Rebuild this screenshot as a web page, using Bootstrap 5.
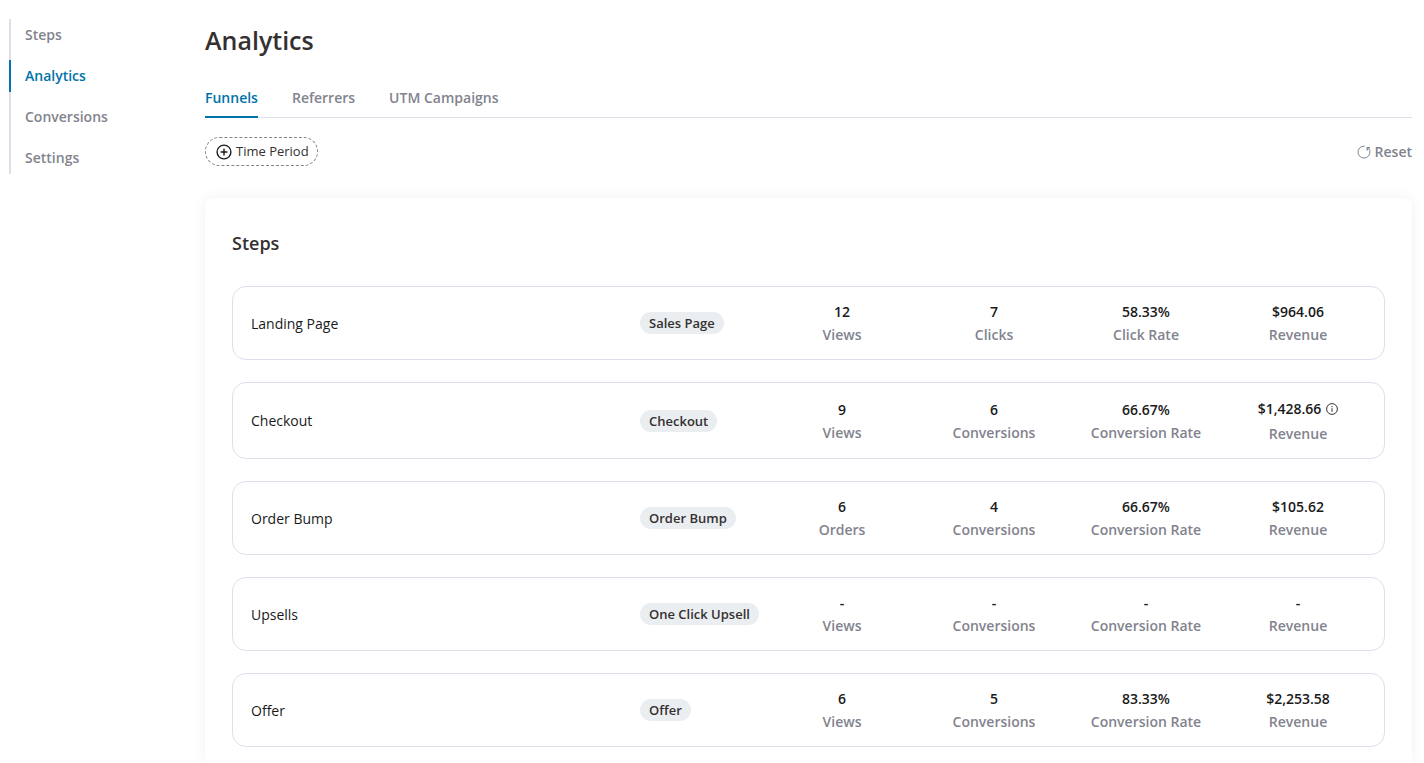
<!DOCTYPE html>
<html lang="en">
<head>
<meta charset="utf-8">
<meta name="viewport" content="width=device-width, initial-scale=1">
<title>Analytics</title>
<link href="https://cdn.jsdelivr.net/npm/bootstrap@5.3.0/dist/css/bootstrap.min.css" rel="stylesheet">
<style>
  :root { --accent: #0073aa; --muted: #82838e; --line: #dedfea; --ink: #353030; }
  body { font-family: "Open Sans", "Noto Sans", sans-serif; font-size: 14px; line-height: 23px; color: #1a1a1a; }
  .shell { padding: 19px 12px 0 9px; }
  .side-nav { width: 196px; }
  .side-list { border-left: 2px solid var(--line); gap: 9px; width: 140px; }
  .side-list a { color: var(--muted); font-weight: 600; line-height: 32px; margin-left: -2px; padding: 0 0 0 14px; border-left: 2px solid transparent; border-radius: 0; }
  .side-list a.active { color: var(--accent); border-color: var(--accent); }
  h1 { font-size: 25px; line-height: 42px; font-weight: 600; color: var(--ink); margin: 0 0 25px; }
  .view-tabs { gap: 34px; border-bottom: 1px solid var(--line); margin-bottom: 19px; }
  .view-tabs a { color: var(--muted); font-weight: 600; padding: 0 0 7px; margin-bottom: -1px; border-bottom: 2px solid transparent; }
  .view-tabs a.active { color: var(--accent); border-color: var(--accent); }
  .filters { margin-bottom: 32px; }
  .period-btn { border: 1px dashed #82838e; border-radius: 15px; background: #fff; color: #353030; font-size: 13px; line-height: 27px; padding: 0 8px 0 9px; gap: 4px; }
  .reset-btn { color: var(--muted); font-size: 14px; line-height: 23px; font-weight: 600; gap: 4px; }
  .steps-card { border-radius: 8px 8px 0 0; padding: 27px 27px 0; box-shadow: 0 0 14px rgba(0,0,0,.06); }
  h2 { font-size: 18px; line-height: 36px; font-weight: 600; color: var(--ink); margin: 0 0 25px; }
  .step-list { gap: 22px; }
  .step { display: grid; grid-template-columns: minmax(0,1fr) 126px repeat(4, 152px); align-items: center; border: 1px solid var(--line); border-radius: 14px; padding: 13px 10px 13px 18px; }
  .step-type { background: #ebeef1; color: #353030; font-size: 13px; line-height: 22px; font-weight: 600; padding: 0 9px; border-radius: 11px; }
  .metric-value { font-weight: 600; }
  .metric-name { font-weight: 600; color: var(--muted); }
  .with-info { gap: 5px; line-height: 26px; }
</style>
</head>
<body>
<div class="shell d-flex min-vh-100">
  <nav class="side-nav flex-shrink-0" aria-label="Funnel">
    <div class="side-list nav flex-column">
      <a class="nav-link" href="#steps">Steps</a>
      <a class="nav-link active" href="#analytics" aria-current="page">Analytics</a>
      <a class="nav-link" href="#conversions">Conversions</a>
      <a class="nav-link" href="#settings">Settings</a>
    </div>
  </nav>
  <main class="flex-grow-1 d-flex flex-column">
    <h1>Analytics</h1>
    <nav class="view-tabs nav" aria-label="Report">
      <a class="nav-link active" href="#funnels" aria-current="page">Funnels</a>
      <a class="nav-link" href="#referrers">Referrers</a>
      <a class="nav-link" href="#utm">UTM Campaigns</a>
    </nav>
    <div class="filters d-flex justify-content-between align-items-center">
      <button type="button" class="period-btn d-inline-flex align-items-center">
        <svg width="17" height="17" viewBox="0 0 17 17" fill="none" stroke="#1a1a1a" stroke-width="1.4" stroke-linecap="round" aria-hidden="true"><circle cx="9" cy="9" r="6.9"/><path d="M9 6.1v5.8M6.1 9h5.8"/></svg>
        Time Period
      </button>
      <button type="button" class="reset-btn btn border-0 p-0 d-inline-flex align-items-center">
        <svg width="14" height="14" viewBox="0 0 14 14" fill="none" stroke="currentColor" aria-hidden="true"><path d="M7.6 1.1A6 6 0 1 0 11.5 3.1"/><path d="M10.2 5.4V2.6H13" stroke-width="1.3"/></svg>
        Reset
      </button>
    </div>
    <section class="steps-card flex-grow-1 bg-white">
      <h2>Steps</h2>
      <div class="step-list d-flex flex-column">
        <article class="step">
          <div>Landing Page</div>
          <div class="d-flex"><span class="step-type text-nowrap">Sales Page</span></div>
          <div class="text-center"><div class="metric-value">12</div><div class="metric-name">Views</div></div>
          <div class="text-center"><div class="metric-value">7</div><div class="metric-name">Clicks</div></div>
          <div class="text-center"><div class="metric-value">58.33%</div><div class="metric-name">Click Rate</div></div>
          <div class="text-center"><div class="metric-value">$964.06</div><div class="metric-name">Revenue</div></div>
        </article>
        <article class="step">
          <div>Checkout</div>
          <div class="d-flex"><span class="step-type text-nowrap">Checkout</span></div>
          <div class="text-center"><div class="metric-value">9</div><div class="metric-name">Views</div></div>
          <div class="text-center"><div class="metric-value">6</div><div class="metric-name">Conversions</div></div>
          <div class="text-center"><div class="metric-value">66.67%</div><div class="metric-name">Conversion Rate</div></div>
          <div class="text-center"><div class="metric-value with-info d-flex justify-content-center align-items-center">$1,428.66
            <svg width="12" height="12" viewBox="0 0 12 12" fill="none" stroke="#353030" aria-hidden="true"><circle cx="6" cy="6" r="5.4"/><path d="M6 5.2v3.6M6 3v1.2"/></svg>
          </div><div class="metric-name">Revenue</div></div>
        </article>
        <article class="step">
          <div>Order Bump</div>
          <div class="d-flex"><span class="step-type text-nowrap">Order Bump</span></div>
          <div class="text-center"><div class="metric-value">6</div><div class="metric-name">Orders</div></div>
          <div class="text-center"><div class="metric-value">4</div><div class="metric-name">Conversions</div></div>
          <div class="text-center"><div class="metric-value">66.67%</div><div class="metric-name">Conversion Rate</div></div>
          <div class="text-center"><div class="metric-value">$105.62</div><div class="metric-name">Revenue</div></div>
        </article>
        <article class="step">
          <div>Upsells</div>
          <div class="d-flex"><span class="step-type text-nowrap">One Click Upsell</span></div>
          <div class="text-center"><div class="metric-value">-</div><div class="metric-name">Views</div></div>
          <div class="text-center"><div class="metric-value">-</div><div class="metric-name">Conversions</div></div>
          <div class="text-center"><div class="metric-value">-</div><div class="metric-name">Conversion Rate</div></div>
          <div class="text-center"><div class="metric-value">-</div><div class="metric-name">Revenue</div></div>
        </article>
        <article class="step">
          <div>Offer</div>
          <div class="d-flex"><span class="step-type text-nowrap">Offer</span></div>
          <div class="text-center"><div class="metric-value">6</div><div class="metric-name">Views</div></div>
          <div class="text-center"><div class="metric-value">5</div><div class="metric-name">Conversions</div></div>
          <div class="text-center"><div class="metric-value">83.33%</div><div class="metric-name">Conversion Rate</div></div>
          <div class="text-center"><div class="metric-value">$2,253.58</div><div class="metric-name">Revenue</div></div>
        </article>
      </div>
    </section>
  </main>
</div>
<script src="https://cdn.jsdelivr.net/npm/bootstrap@5.3.0/dist/js/bootstrap.bundle.min.js"></script>
</body>
</html>
